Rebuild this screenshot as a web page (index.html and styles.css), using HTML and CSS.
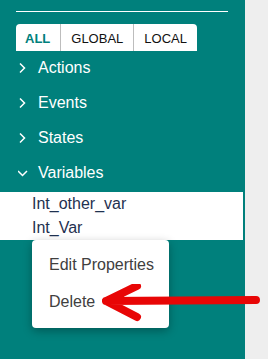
FILE: index.html
```html
<!DOCTYPE html>
<html lang="en">
<head>
    <meta charset="UTF-8">
    <title>Variables</title>
    <link rel="stylesheet" href="styles.css">
</head>
<body>
    <div class="sidebar">
        <div class="rule"></div>
        <div class="tabs">
            <button class="tab active">ALL</button>
            <button class="tab">GLOBAL</button>
            <button class="tab">LOCAL</button>
        </div>
        <ul class="tree">
            <li class="node"><svg class="chev" width="20" height="12" viewBox="0 0 20 12"><path d="M2 1.5 L6.5 6 L2 10.5" fill="none" stroke="#fff" stroke-width="1.5"/></svg>Actions</li>
            <li class="node"><svg class="chev" width="20" height="12" viewBox="0 0 20 12"><path d="M2 1.5 L6.5 6 L2 10.5" fill="none" stroke="#fff" stroke-width="1.5"/></svg>Events</li>
            <li class="node"><svg class="chev" width="20" height="12" viewBox="0 0 20 12"><path d="M2 1.5 L6.5 6 L2 10.5" fill="none" stroke="#fff" stroke-width="1.5"/></svg>States</li>
            <li class="node open"><svg class="chev" width="20" height="12" viewBox="0 0 20 12"><path d="M0 4 L4.5 8.5 L9 4" fill="none" stroke="#fff" stroke-width="1.5"/></svg>Variables</li>
        </ul>
        <ul class="vars">
            <li>Int_other_var</li>
            <li>Int_Var</li>
        </ul>

        <!-- context menu opened on Int_Var -->
        <div class="menu">
            <div class="menu-item">Edit Properties</div>
            <div class="menu-item">Delete</div>
        </div>

        <svg class="arrow" width="160" height="40" viewBox="0 0 160 40">
            <path d="M154 16 L4 17 M35 2 L4 17 L35 33" fill="none" stroke="#e80606" stroke-width="8" stroke-linecap="round" stroke-linejoin="round"/>
        </svg>
    </div>
    <div class="filler"></div>
</body>
</html>
```

FILE: styles.css
```css
* {
    box-sizing: border-box;
    margin: 0;
    padding: 0;
}

html, body {
    height: 100%;
}

body {
    display: flex;
    font-family: "Liberation Sans", Arial, sans-serif;
    background: #eeeeee;
}

.sidebar {
    position: relative;
    width: 245px;
    height: 100%;
    background: #00807c;
    color: #fff;
}

.filler {
    flex: 1;
    background: #eeeeee;
}

.rule {
    margin: 11px 0 0 16px;
    width: 212px;
    height: 1px;
    background: #fff;
}

.tabs {
    display: flex;
    margin: 12px 0 0 16px;
    width: max-content;
    height: 27px;
    background: #fff;
    border-radius: 4px 4px 0 0;
}

.tab {
    background: transparent;
    border: none;
    border-left: 1px solid #bdbdbd;
    font: 13px "Liberation Sans", Arial, sans-serif;
    color: #111;
    padding: 1px 10px 0;
    cursor: pointer;
}

.tab:first-child {
    border-left: none;
    padding: 1px 10px 0 9px;
}

.tab.active {
    color: #00807c;
    font-weight: bold;
}

.tree {
    list-style: none;
}

.node {
    display: flex;
    align-items: center;
    height: 35px;
    padding-left: 18px;
    padding-bottom: 2px;
    font-size: 16px;
}

.chev {
    flex: none;
    margin-top: 1px;
}

.vars {
    list-style: none;
    width: 243px;
    margin-top: 1px;
    background: #fff;
    color: #1f3150;
}

.vars li {
    height: 24px;
    line-height: 24px;
    padding-left: 32px;
    font-size: 16px;
}

.menu {
    position: absolute;
    left: 32px;
    top: 240px;
    width: 137px;
    padding: 8px 0;
    background: #fff;
    border-radius: 4px;
    box-shadow: 0 3px 10px rgba(0, 0, 0, 0.3);
}

.menu-item {
    height: 36px;
    line-height: 36px;
    padding-left: 17px;
    font-size: 16px;
    color: #404040;
}

.menu-item:first-child {
    line-height: 34px;
}

.arrow {
    position: absolute;
    left: 102px;
    top: 284px;
}
```
